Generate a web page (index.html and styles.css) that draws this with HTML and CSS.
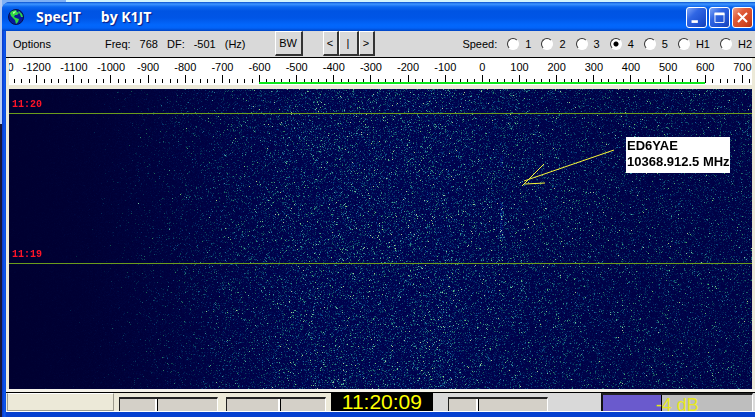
FILE: index.html
```html
<!DOCTYPE html>
<html lang="en">
<head>
<meta charset="utf-8">
<title>SpecJT</title>
<link rel="stylesheet" href="styles.css">
</head>
<body>
<main class="window">
  <header class="titlebar">
    <svg class="globe" viewBox="0 0 16 16" aria-hidden="true">
      <circle cx="8" cy="8" r="7.5" fill="#0a1a98" stroke="#06104c"/>
      <path d="M2 4 4 2 8 1 9 3 11 4 9 6 7 6 6 8 8 9 11 10 10 13 8 15 7 11 5 9 3 7z" fill="#2fd845"/>
      <path d="M11 2 14 5 15 8 13 8 12 5 10 3z" fill="#2fd845"/>
      <path d="M5 3 8 2 7 4 5 5z" fill="#b8f8a0"/>
    </svg>
    <h1 class="title"><span>SpecJT</span><span>by K1JT</span></h1>
    <button class="win-btn" type="button" aria-label="Minimize"><svg viewBox="0 0 21 21"><path d="M5 15h7" stroke="#fff" stroke-width="3"/></svg></button>
    <button class="win-btn" type="button" aria-label="Maximize"><svg viewBox="0 0 21 21"><path d="M5.5 6v10h10V6z" fill="none" stroke="#fff"/><path d="M5 6.5h11" stroke="#fff" stroke-width="3"/></svg></button>
    <button class="win-btn close" type="button" aria-label="Close"><svg viewBox="0 0 21 21"><path d="M5.500 5.500l10 10m0-10l-10 10" stroke="#fff" stroke-width="2.200"/></svg></button>
  </header>

  <div class="client">
    <div class="toolbar">
      <button class="menu" type="button">Options</button>
      <div class="readout"><span>Freq:</span><span>768</span><span>DF:</span><span>-501</span><span>(Hz)</span></div>
      <button class="tk bw" type="button">BW</button>
      <div class="nudge">
        <button class="tk" type="button">&lt;</button>
        <button class="tk mid" type="button">|</button>
        <button class="tk" type="button">&gt;</button>
      </div>
      <fieldset class="speed">
        <span>Speed:</span>
        <label><input type="radio" name="speed">1</label>
        <label><input type="radio" name="speed">2</label>
        <label><input type="radio" name="speed">3</label>
        <label><input type="radio" name="speed" checked>4</label>
        <label><input type="radio" name="speed">5</label>
        <label><input type="radio" name="speed">H1</label>
        <label><input type="radio" name="speed">H2</label>
      </fieldset>
    </div>

    <div class="display">
      <div class="scale" id="scale"><div class="band"></div></div>
      <section class="waterfall">
        <canvas id="fall" width="743" height="300"></canvas>
        <div class="minute first"><time>11:20</time></div>
        <div class="minute"><time>11:19</time></div>
        <svg class="arrow" width="100" height="44" viewBox="0 0 100 44" aria-hidden="true">
          <path d="M96 4 6 35M26 18 4 40M7 38 27 37" fill="none" stroke="#f8f838"/>
        </svg>
        <p class="note">ED6YAE<br>10368.912.5 MHz</p>
      </section>
    </div>

    <footer class="status">
      <div class="message"></div>
      <input class="trough" type="range" value="38" aria-label="Brightness">
      <input class="trough second" type="range" value="54" aria-label="Contrast">
      <time class="clock">11:20:09</time>
      <input class="trough third" type="range" value="29" aria-label="Gain">
      <div class="meter"><div class="level"></div><span>-4 dB</span></div>
    </footer>
  </div>
</main>
<script src="app.js"></script>
</body>
</html>
```
FILE: styles.css
```css
* { box-sizing: border-box; }

body {
  margin: 0;
  min-height: 100vh;
  padding: 2px 0 4px 2px;
  display: flex;
  background:
    linear-gradient(#fff, #fff) bottom / 100% 4px no-repeat,
    linear-gradient(#b9cdf2 0 124px, #16163a 124px) left / 2px 100% no-repeat,
    linear-gradient(90deg, #7eb0f4 0 66px, #d2f3fc 66px);
  font: 11px/14px "Liberation Sans", Arial, sans-serif;
  color: #000;
}

button, input { font: inherit; color: inherit; margin: 0; }

.window {
  flex: 1;
  min-width: 0;
  display: flex;
  flex-direction: column;
  padding: 0 0 5px 4px;
  background: linear-gradient(90deg, #0a38c8, #0c5cf4 3px, #0640d0 4px);
  border-radius: 8px 0 0 0;
}

.titlebar {
  height: 29px;
  margin-left: -4px;
  padding: 1px 2px 0 6px;
  display: flex;
  align-items: center;
  gap: 2px;
  border-radius: 8px 0 0 0;
  background: linear-gradient(#0a50d0, #3d95ff 2px, #0a66f0 5px, #0054e3 9px, #0055e6 16px, #0267fc 23px, #0263f8 26px, #0044c4);
}

.globe { width: 16px; height: 16px; }

.title {
  flex: 1;
  margin: 0 0 0 10px;
  display: flex;
  gap: 20px;
  font: bold 14px/20px "Open Sans", sans-serif;
  color: #fff;
  text-shadow: 1px 1px 1px #0a1883;
}

.win-btn {
  width: 21px;
  height: 21px;
  padding: 0;
  border: 1px solid #fff;
  border-radius: 3px;
  background: linear-gradient(135deg, #7fa6f8, #3066e4 35%, #1c4fd0 75%, #1740b4);
}
.win-btn svg { display: block; width: 19px; height: 19px; }
.win-btn.close { background: linear-gradient(135deg, #f0a088, #e05a38 35%, #cf4420 75%, #b03010); }

.client {
  flex: 1;
  display: flex;
  flex-direction: column;
  background: #ece9d8;
}

.toolbar {
  height: 26px;
  padding: 0 3px 0 7px;
  display: flex;
  align-items: center;
  background: #d9d9d9;
}

.menu { padding: 0; border: 0; background: none; }

.readout { display: flex; gap: 9px; margin-left: 54px; }

.tk {
  width: 16px;
  height: 25px;
  padding: 0;
  align-self: flex-start;
  border: 1px solid;
  border-width: 1px 2px 2px 1px;
  border-color: #fff #333 #333 #fff;
  background: #d9d9d9;
}
.tk.bw { width: 28px; margin-left: 29px; }
.tk.mid { width: 20px; }
.nudge { display: flex; align-self: flex-start; margin-left: 20px; }

.speed {
  margin: 0 0 0 auto;
  padding: 0;
  border: 0;
  display: flex;
  gap: 10px;
}
.speed label { display: flex; align-items: center; gap: 6px; }
.speed input {
  appearance: none;
  width: 12px;
  height: 12px;
  border: 1px solid;
  border-color: #333 #fff #fff #333;
  border-radius: 50%;
  background: #fff;
}
.speed input:checked { background: radial-gradient(circle, #000 2px, #fff 3px); }

.display {
  flex: 1;
  display: flex;
  flex-direction: column;
  padding: 0 3px 0 3px;
  border-top: 1px solid #000;
  border-bottom: 3px solid #f4f2ea;
}

.scale {
  position: relative;
  height: 27px;
  display: flex;
  overflow: hidden;
  background: #fff;
}
.mark {
  flex: 0 0 5%;
  display: flex;
  flex-direction: column;
  justify-content: space-between;
  align-items: center;
  padding: 2px 0;
  white-space: nowrap;
}
.mark:nth-child(2) { margin-left: -28px; }
.ticks { display: flex; width: 100%; height: 8px; align-items: flex-end; justify-content: space-around; }
.ticks i { width: 1px; height: 4px; background: #000; }
.ticks i:nth-child(3) { height: 8px; }
.band {
  position: absolute;
  left: 250px;
  bottom: 1px;
  width: 60%;
  height: 2px;
  background: #0be81a;
}

.waterfall {
  position: relative;
  flex: 1;
  min-height: 300px;
  margin-top: 4px;
  background: #000040;
}
.waterfall canvas {
  position: absolute;
  inset: 0;
  width: 100%;
  height: 100%;
  image-rendering: pixelated;
}
.minute {
  position: relative;
  height: 150px;
  padding: 0 3px 2px;
  display: flex;
  align-items: flex-end;
  border-bottom: 1px solid #6c9c1c;
  font: bold 10px/12px "Liberation Mono", monospace;
  color: #ff1428;
}
.minute.first { height: 25px; }

.arrow { position: absolute; left: 509px; top: 57px; }
.note {
  position: absolute;
  left: 617px;
  top: 48px;
  margin: 0;
  padding: 1px 0 3px 1px;
  background: #fff;
  font-weight: bold;
  font-size: 13px;
  line-height: 16px;
  white-space: nowrap;
}

.status {
  height: 20px;
  display: flex;
  align-items: flex-end;
  padding: 0 2px 0 1px;
  border-top: 1px solid #000;
  border-bottom: 1px solid #fff;
  background: linear-gradient(90deg, #ece9d8 0 325px, #d9d9d9 425px);
}
.message {
  flex: 107 1 0;
  align-self: stretch;
  border: 1px solid;
  border-color: #fff #9c9a8c #9c9a8c #9c9a8c;
}
.trough {
  appearance: none;
  flex: 100 1 0;
  min-width: 0;
  height: 14px;
  margin: 0 0 0 5px;
  border: 1px solid;
  border-width: 2px 1px 0 1px;
  border-color: #222 #fff #222 #222;
  background: #d4d0c8;
}
.trough.second { margin: 0 5px 0 8px; }
.trough.third { margin: 0 53px 0 15px; }
.trough::-webkit-slider-thumb {
  appearance: none;
  width: 3px;
  height: 12px;
  background: linear-gradient(90deg, #fff 2px, #000 2px);
}
.clock {
  flex: none;
  width: 102px;
  height: 18px;
  text-align: center;
  background: #000;
  color: #ff0;
  font-size: 21px;
  line-height: 18px;
}
.meter {
  position: relative;
  flex: 153 1 0;
  align-self: stretch;
  overflow: hidden;
  display: flex;
  justify-content: center;
  border: 2px solid;
  border-width: 2px 1px 0 2px;
  border-color: #222 #fff #222 #111;
  background: #bebebe;
}
.level {
  position: absolute;
  inset: 0 60% 0 0;
  border-right: 1px solid #000;
  background: #6a5acd;
}
.meter span {
  position: relative;
  font-size: 18px;
  line-height: 20px;
  color: #e8e820;
}
```
FILE: app.js
```js
// Frequency scale: one cell per 100 Hz with five 20 Hz ticks.
const scale = document.getElementById('scale');
for (let hz = -1300; hz <= 700; hz += 100) {
  const mark = document.createElement('div');
  mark.className = 'mark';
  mark.innerHTML = '<span>' + hz + '</span><div class="ticks"><i></i><i></i><i></i><i></i><i></i></div>';
  scale.appendChild(mark);
}

// Waterfall: receiver noise shaped by the passband.
const canvas = document.getElementById('fall');
const ctx = canvas.getContext('2d');
const w = canvas.width, h = canvas.height;
const image = ctx.createImageData(w, h);
let seed = 20491;
function random() {
  seed = (seed + 0x6d2b79f5) | 0;
  let t = Math.imul(seed ^ (seed >>> 15), 1 | seed);
  t = (t + Math.imul(t ^ (t >>> 7), 61 | t)) ^ t;
  return ((t ^ (t >>> 14)) >>> 0) / 4294967296;
}
const shape = [[0, 0.05], [80, 0.15], [150, 0.36], [230, 0.58], [300, 0.72], [430, 0.76], [520, 0.66], [600, 0.58], [743, 0.56]];
function passband(x) {
  for (let i = 1; i < shape.length; i++) {
    const [x0, y0] = shape[i - 1], [x1, y1] = shape[i];
    if (x <= x1) return y0 + (y1 - y0) * (x - x0) / (x1 - x0);
  }
  return 0.56;
}
for (let y = 0; y < h; y++) {
  for (let x = 0; x < w; x++) {
    let gain = passband(x);
    const signal = Math.abs(x - 492) < 2 && ((y > 65 && y < 78) || (y > 112 && y < 150));
    if (signal) gain = 1.2;
    const level = -Math.log(1 - random()) * gain;
    const v = Math.max(0, level - 0.8);
    const tint = random();
    const p = (y * w + x) * 4;
    image.data[p] = Math.min(170, v * v * (5 + tint * 12));
    image.data[p + 1] = Math.min(200, level * 7 + v * (35 + tint * 35));
    image.data[p + 2] = Math.min(160, 46 + gain * 38 + level * 12 + v * (30 - tint * 30));
    image.data[p + 3] = 255;
  }
}
ctx.putImageData(image, 0, 0);
```
